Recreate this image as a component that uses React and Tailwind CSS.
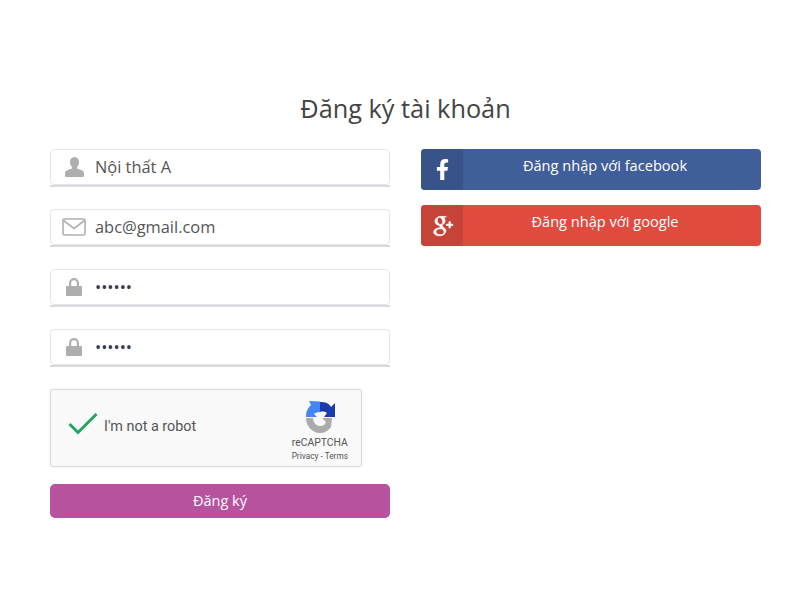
import React from "react";
import { FaFacebookF } from "react-icons/fa";
import { TiSocialGooglePlus } from "react-icons/ti";

const UserIcon = () => (
  <svg width="19" height="20" viewBox="0 0 19 20" fill="#aeaeae">
    <path d="M9.5 0 C12.5 0 14 2.2 14 5 C14 7.2 13.2 9 12 10 L12 11.5 C15.5 12.5 19 13.5 19 16 L19 18.5 C19 19.4 18.4 20 17.5 20 L1.5 20 C0.6 20 0 19.4 0 18.5 L0 16 C0 13.5 3.5 12.5 7 11.5 L7 10 C5.8 9 5 7.2 5 5 C5 2.2 6.5 0 9.5 0 Z" />
  </svg>
);

const MailIcon = () => (
  <svg width="24" height="18" viewBox="0 0 24 18" fill="none" stroke="#b0b0b0" strokeWidth="1.6">
    <rect x="1" y="1" width="22" height="16" rx="1.5" />
    <path d="M1.5 2.5 L12 10.5 L22.5 2.5" />
  </svg>
);

const LockIcon = () => (
  <svg width="16" height="18" viewBox="0 0 16 18" fill="#aeaeae">
    <path d="M3 8 L3 5 A5 5 0 0 1 13 5 L13 8 L15 8 A1 1 0 0 1 16 9 L16 17 A1 1 0 0 1 15 18 L1 18 A1 1 0 0 1 0 17 L0 9 A1 1 0 0 1 1 8 Z M5.2 8 L10.8 8 L10.8 5 A2.8 2.8 0 0 0 5.2 5 Z" fillRule="evenodd" />
  </svg>
);

const RecaptchaLogo = () => (
  <svg width="32" height="33" viewBox="0 0 32 33">
    <path d="M2 18 H9 C9 22 12 26 16 26 C19 26 21 25 22 22 L18 18 H28 L27 27 C24 31 20 33 16 33 C8 33 2 26 2 18 Z" fill="#ababab" />
    <path d="M16 2 C21 2 25 3 27 7 L31 3 L31 17 L20 17 L23 13 C22 12 19 11 16 12 Z" fill="#1c3aa9" />
    <path d="M2 17 C2 11 4 8 7 5 L5 1 L16 1.5 L16 12 C13 12 11 13 10 14 L13 17 Z" fill="#4285f4" />
  </svg>
);

const Field = ({ icon, type = "text", value }) => (
  <div className="h-[38px] border-b-2 border-[#d8dadd]">
    <div className="h-[36px] flex items-center rounded-[4px] border border-[#e3e5e8] bg-white">
      <div className="w-[44px] pl-[2px] flex justify-center items-center shrink-0">{icon}</div>
      <input
        className={`flex-1 min-w-0 text-[16.4px] outline-none bg-transparent ${type === "password" ? "text-[#333a50]" : "text-[#555]"}`}
        type={type}
        defaultValue={value}
        readOnly
      />
    </div>
  </div>
);

const SocialButton = ({ icon, text, bg, iconBg }) => (
  <div className={`h-[41px] flex rounded-[4px] overflow-hidden text-white text-[14.6px] ${bg}`}>
    <div className={`w-[42px] flex justify-center items-center shrink-0 ${iconBg}`}>{icon}</div>
    <div className="flex-1 text-center pt-[6px] pr-[14px]">{text}</div>
  </div>
);

export default function App() {
  return (
    <div className="w-[800px] h-[600px] bg-white pt-[90px] pl-[50px] font-['Open_Sans',sans-serif]">
      <h1 className="w-[711px] text-center text-[25.3px] leading-[36px] text-[#444]">Đăng ký tài khoản</h1>
      <div className="w-[711px] mt-[23px] flex justify-between">
        <div className="w-[340px]">
          <div className="flex flex-col gap-[22px]">
            <Field icon={<UserIcon />} value="Nội thất A" />
            <Field icon={<MailIcon />} value="abc@gmail.com" />
            <Field icon={<LockIcon />} type="password" value="123456" />
            <Field icon={<LockIcon />} type="password" value="123456" />
          </div>
          <div className="w-[312px] h-[78px] mt-[22px] flex items-center rounded-[3px] border border-[#d9d9d9] bg-[#f9f9f9] shadow-[0_0_3px_rgba(0,0,0,0.08)] font-['Roboto',sans-serif]">
            <svg className="ml-[17px] mb-[8px] shrink-0" width="30" height="24" viewBox="0 0 30 24" fill="none" stroke="#1fa463" strokeWidth="3">
              <path d="M1.5 12 L10 20.5 L28.5 2" />
            </svg>
            <span className="ml-[6px] mb-[3px] text-[14.4px] text-[#555]">I'm not a robot</span>
            <div className="ml-auto mr-[13px] pt-[4px] flex flex-col items-center text-[#555]">
              <RecaptchaLogo />
              <span className="mt-[4px] text-[10.4px] leading-[12px]">reCAPTCHA</span>
              <span className="mt-[2px] text-[8.3px] leading-[10px]">Privacy - Terms</span>
            </div>
          </div>
          <div className="h-[34px] mt-[17px] pb-[1px] flex justify-center items-center rounded-[5px] bg-[#b7529f] text-white text-[14.5px]">
            Đăng ký
          </div>
        </div>
        <div className="w-[340px] flex flex-col gap-[15px]">
          <SocialButton
            icon={<FaFacebookF size={21} />}
            text="Đăng nhập với facebook"
            bg="bg-[#3f5e9a]"
            iconBg="bg-[#375387]"
          />
          <SocialButton
            icon={<TiSocialGooglePlus size={31} stroke="currentColor" strokeWidth={0.6} />}
            text="Đăng nhập với google"
            bg="bg-[#e04b3f]"
            iconBg="bg-[#c64337]"
          />
        </div>
      </div>
    </div>
  );
}
